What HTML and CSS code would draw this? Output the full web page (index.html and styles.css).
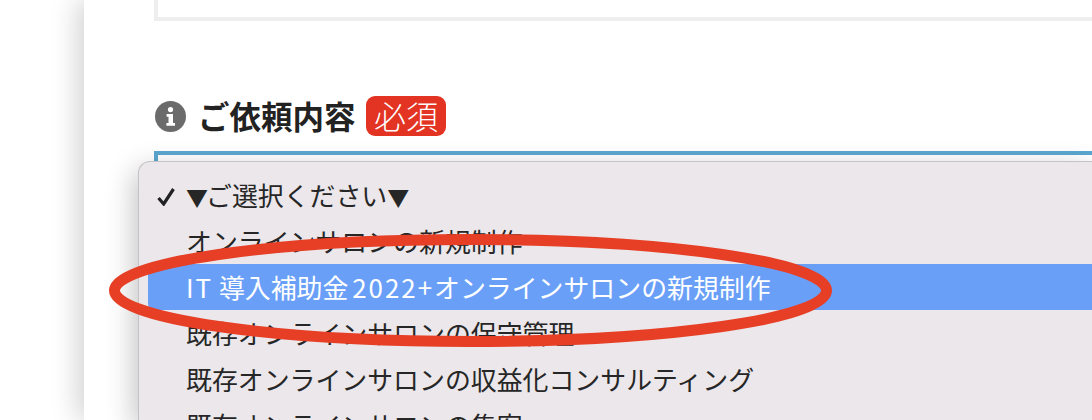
FILE: index.html
```html
<!DOCTYPE html>
<html lang="ja">
  <head>
    <meta charset="UTF-8">
    <title>ご依頼内容</title>
    <link rel="stylesheet" href="styles.css">
  </head>
  <body>
    <div class="page">
      <div class="prev-field"></div>
      <div class="field-label">
        <svg class="info-icon" viewBox="0 0 31 31">
          <circle cx="15.5" cy="15.5" r="15.5" fill="#6b6b6b"/>
          <circle cx="15.5" cy="8.6" r="2.6" fill="#fff"/>
          <path d="M11.6 13h6.4v9h2v2.8h-8.6V22h2.1v-6.2h-1.9z" fill="#fff"/>
        </svg>
        <span class="label-text">ご依頼内容</span>
        <span class="required">必須</span>
      </div>
      <div class="select-box"></div>

      <div class="select-menu">
        <div class="option">
          <svg class="check" viewBox="0 0 18 19">
            <path d="M1.5 11l5.2 6L16.5 2" fill="none" stroke="#222" stroke-width="3.2"/>
          </svg>
          <span class="arrow">▼</span>ご選択ください<span class="arrow">▼</span>
        </div>
        <div class="option">オンラインサロンの新規制作</div>
        <div class="option active"><span class="latin first">IT </span>導入補助金<span class="latin"> 2022+</span>オンラインサロンの新規制作</div>
        <div class="option">既存オンラインサロンの保守管理</div>
        <div class="option">既存オンラインサロンの収益化コンサルティング</div>
        <div class="option">既存オンラインサロンの集客</div>
      </div>

      <svg class="circle-mark" viewBox="0 0 1092 420">
        <ellipse cx="470.5" cy="290.5" rx="356" ry="51" fill="none" stroke="#e63f26" stroke-width="11"/>
      </svg>
    </div>
  </body>
</html>
```

FILE: styles.css
```css
html, body {
  margin: 0;
  padding: 0;
  height: 420px;
  overflow: hidden;
  background-color: #fff;
}
body {
  font-family: "Noto Sans CJK JP", "Noto Sans", sans-serif;
  color: #222;
}
.page {
  position: relative;
  margin-left: 84px;
  height: 420px;
  padding-left: 70px;
  background-color: #fff;
  box-shadow: -6px 0 26px rgba(0, 0, 0, 0.18);
}
.prev-field {
  height: 17px;
  border: 4px solid #eee;
  border-top: none;
  border-right: none;
}
.field-label {
  display: flex;
  align-items: center;
  margin-top: 75px;
  height: 40px;
}
.info-icon {
  width: 31px;
  height: 31px;
  margin: 0 12px 0 1px;
}
.label-text {
  font-size: 31.5px;
  font-weight: 700;
  line-height: 36px;
  margin-bottom: 3px;
  color: #222;
}
.required {
  margin-left: 10.5px;
  width: 80px;
  height: 40px;
  border-radius: 9px;
  background-color: #e33323;
  color: #fff;
  font-size: 32px;
  font-weight: 300;
  line-height: 38px;
  text-align: center;
}
.select-box {
  margin-top: 15px;
  height: 100px;
  border-top: 4px solid #5aa7d1;
  border-left: 4px solid #5aa7d1;
}
.select-menu {
  position: absolute;
  left: 54px;
  right: 0;
  top: 161px;
  bottom: 0;
  overflow: hidden;
  box-sizing: border-box;
  padding: 10px 0 0 9px;
  background-color: #ebe7ea;
  border: 1px solid #c4c2c4;
  border-width: 1px 0 0 1px;
  border-radius: 12px 0 0 0;
  box-shadow: -4px 8px 28px rgba(0, 0, 0, 0.24);
}
.option {
  position: relative;
  height: 46px;
  padding-left: 38px;
  font-size: 25.9px;
  line-height: 46px;
  white-space: nowrap;
  color: #262626;
}
.option.active {
  background-color: #6a9ff8;
  color: #fff;
  border-radius: 6px 0 0 6px;
}
.arrow {
  font-size: 22px;
  letter-spacing: -2px;
}
.latin {
  letter-spacing: 2px;
  word-spacing: -4px;
  white-space: pre;
}
.latin.first {
  word-spacing: -2px;
}
.check {
  position: absolute;
  left: 9px;
  top: 15px;
  width: 18px;
  height: 19px;
}
.circle-mark {
  position: absolute;
  left: -84px;
  top: 0;
  width: 1092px;
  height: 420px;
}
```
